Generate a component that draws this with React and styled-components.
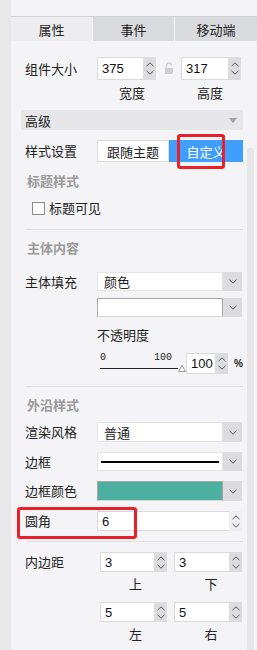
import React from 'react'
import styled, { createGlobalStyle } from 'styled-components'

const Global = createGlobalStyle`
  html, body { margin: 0; padding: 0; background: #f4f4f6; }
  body { font-family: "Noto Sans CJK SC", "Liberation Sans", sans-serif; font-size: 13px; color: #222; }
`

const NUM = `"Liberation Sans", "DejaVu Sans", sans-serif`

const Page = styled.div`
  display: flex;
  width: 257px;
  height: 650px;
  overflow: hidden;
`

const Gutter = styled.div`
  width: 11px;
  flex-shrink: 0;
  background: #e8e8e8;
`

const Panel = styled.div`
  flex: 1;
  display: flex;
  flex-direction: column;
  background: #f4f4f6;
`

const TopStrip = styled.div`
  height: 16px;
  border-bottom: 1px solid #d2d2d6;
`

const Tabs = styled.div`
  display: grid;
  grid-template-columns: 81px 81px 1fr;
  gap: 1px;
  background: #f4f4f6;
  height: 24px;
`

const Tab = styled.div`
  display: flex;
  align-items: center;
  justify-content: center;
  font-size: 13px;
  background: ${p => (p.$active ? '#ededf0' : '#d9dadd')};
  color: #222;
`

const Content = styled.div`
  flex: 1;
  display: flex;
  gap: 4px;
  padding-left: 10px;
`

const Body = styled.div`
  width: 222px;
  display: flex;
  flex-direction: column;
`

const ScrollRail = styled.div`
  width: 7px;
  margin-top: 107px;
  background: #e6e6e8;
  border-radius: 3px 3px 0 0;
`

const Row = styled.div`
  display: grid;
  grid-template-columns: 76px 1fr;
  align-items: center;
  margin-top: ${p => p.$mt || 0}px;
  position: relative;
`

const Label = styled.div`
  padding-left: 4px;
  font-size: 13px;
  line-height: 16px;
  white-space: nowrap;
`

const Pair = styled.div`
  display: flex;
  align-items: center;
  gap: ${p => p.$gap || 0}px;
  padding-left: ${p => p.$pl || 0}px;
`

const LockSlot = styled.div`
  width: 25px;
  display: flex;
  justify-content: center;
`

const NumBox = styled.div`
  display: flex;
  height: ${p => p.$h || 20}px;
  width: ${p => p.$w}px;
  flex-shrink: 0;
`

const NumValue = styled.div`
  flex: 1;
  background: #fff;
  border: 1px solid #dadada;
  border-right: none;
  display: flex;
  align-items: center;
  padding-left: 4px;
  font-family: ${NUM};
  font-size: 13px;
  color: #111;
`

const Spinner = styled.div`
  width: 13px;
  background: ${p => (p.$light ? '#eeeef0' : '#dcdcdf')};
  display: flex;
  flex-direction: column;
  align-items: center;
  justify-content: center;
  gap: 3px;
`

const Captions = styled.div`
  display: grid;
  grid-template-columns: 76px ${p => p.$first}px ${p => p.$second}px;
  margin-top: ${p => p.$mt || 0}px;
  line-height: 14px;
  font-size: 13px;
  text-align: center;
`

const AdvancedBar = styled.div`
  margin-top: 10px;
  height: 20px;
  background: #e6e6e9;
  display: flex;
  align-items: center;
  justify-content: space-between;
  padding: 0 6px 0 4px;
  font-size: 13px;
`

const Segmented = styled.div`
  display: flex;
  height: 22px;
  position: relative;
`

const SegButton = styled.div`
  width: ${p => p.$w}px;
  display: flex;
  align-items: center;
  justify-content: center;
  font-size: 13px;
  background: ${p => (p.$on ? '#409eff' : '#fff')};
  color: ${p => (p.$on ? '#fff' : '#222')};
  border: 1px solid ${p => (p.$on ? '#409eff' : '#dcdcdc')};
  box-sizing: border-box;
`

const Highlight = styled.div`
  position: absolute;
  border: 3px solid #e8202a;
  border-radius: 3px;
  box-sizing: border-box;
  pointer-events: none;
`

const SectionTitle = styled.div`
  margin-top: ${p => p.$mt}px;
  padding-left: 6px;
  font-size: 13px;
  line-height: 16px;
  font-weight: 700;
  color: #9a9a9a;
`

const CheckRow = styled.label`
  margin-top: 11px;
  padding-left: 11px;
  display: flex;
  align-items: center;
  gap: 4px;
  line-height: 16px;
  font-size: 13px;
`

const Box = styled.span`
  width: 11px;
  height: 11px;
  border: 1px solid #8a8a8a;
  background: #fff;
`

const Divider = styled.div`
  margin-top: ${p => p.$mt}px;
  margin-left: 5px;
  height: 1px;
  background: #e0e0e3;
`

const Select = styled.div`
  display: flex;
  height: ${p => p.$h || 20}px;
  width: 145px;
`

const SelectField = styled.div`
  flex: 1;
  display: flex;
  align-items: center;
  padding: 0 ${p => (p.$pad ? 6 : 3)}px;
  font-size: 13px;
  background: ${p => p.$fill || '#fff'};
  border: 1px solid ${p => (p.$sunken ? '#a8a8a8' : '#e4e4e4')};
  border-bottom-color: ${p => (p.$sunken ? '#d6d6d6' : '#e4e4e4')};
  box-sizing: border-box;
`

const SelectArrow = styled.div`
  width: 19px;
  background: #dcdcdf;
  display: flex;
  align-items: center;
  justify-content: center;
`

const LineSample = styled.div`
  flex: 1;
  height: 2px;
  background: #000;
`

const SubText = styled.div`
  margin-top: ${p => p.$mt}px;
  padding-left: 76px;
  line-height: 16px;
  font-size: 13px;
`

const SliderRow = styled.div`
  margin-top: 10px;
  padding-left: 79px;
  display: flex;
  align-items: flex-end;
  height: 21px;
`

const Slider = styled.div`
  width: 86px;
  display: flex;
  flex-direction: column;
  margin-bottom: 2px;
`

const Ticks = styled.div`
  display: flex;
  justify-content: space-between;
  width: 72px;
  font-family: "Liberation Mono", monospace;
  font-size: 10px;
  line-height: 10px;
  color: #222;
  margin-bottom: 2px;
`

const Track = styled.div`
  display: flex;
  align-items: flex-end;
`

const TrackLine = styled.div`
  width: 78px;
  height: 1px;
  background: #222;
  margin-bottom: 3px;
`

const Percent = styled.div`
  margin-left: 6px;
  align-self: center;
  font-family: ${NUM};
  font-size: 10px;
  font-weight: 700;
  color: #222;
`

const Chevron = ({ dir = 'down', color = '#5a5a5a' }) => (
  <svg width="8" height="5" viewBox="0 0 8 5">
    <path
      d={dir === 'down' ? 'M0.5 0.8 L4 4.2 L7.5 0.8' : 'M0.5 4.2 L4 0.8 L7.5 4.2'}
      fill="none"
      stroke={color}
      strokeWidth="1"
    />
  </svg>
)

const Spin = ({ light }) => (
  <Spinner $light={light}>
    <Chevron dir="up" />
    <Chevron dir="down" />
  </Spinner>
)

const Num = ({ value, w, h, light }) => (
  <NumBox $w={w} $h={h}>
    <NumValue>{value}</NumValue>
    <Spin light={light} />
  </NumBox>
)

const Lock = () => (
  <svg width="10" height="13" viewBox="0 0 10 13">
    <path d="M2.5 6 V3.5 A2.5 2.5 0 0 1 7.5 3.5" fill="none" stroke="#cfcfd2" strokeWidth="1.4" />
    <rect x="1" y="6" width="8" height="6" fill="#cfcfd2" />
  </svg>
)

const DropSelect = ({ children, fill, sunken, pad, h }) => (
  <Select $h={h}>
    <SelectField $fill={fill} $sunken={sunken} $pad={pad}>
      {children}
    </SelectField>
    <SelectArrow>
      <Chevron />
    </SelectArrow>
  </Select>
)

export default function App() {
  return (
    <>
      <Global />
      <Page>
        <Gutter />
        <Panel>
          <TopStrip />
          <Tabs>
            <Tab $active>属性</Tab>
            <Tab>事件</Tab>
            <Tab>移动端</Tab>
          </Tabs>
          <Content>
            <Body>
              <Row $mt={16}>
                <Label>组件大小</Label>
                <Pair>
                  <Num value="375" w={59} h={23} />
                  <LockSlot>
                    <Lock />
                  </LockSlot>
                  <Num value="317" w={60} h={23} />
                </Pair>
              </Row>
              <Captions $mt={6} $first={70} $second={86}>
                <span />
                <span>宽度</span>
                <span>高度</span>
              </Captions>

              <AdvancedBar>
                <span>高级</span>
                <svg width="8" height="5" viewBox="0 0 8 5">
                  <path d="M0 0 H8 L4 5 Z" fill="#a0a0a4" />
                </svg>
              </AdvancedBar>

              <Row $mt={10}>
                <Label>样式设置</Label>
                <Segmented>
                  <SegButton $w={72}>跟随主题</SegButton>
                  <SegButton $w={74} $on>自定义</SegButton>
                  <Highlight style={{ left: 80, top: -6, width: 48, height: 35 }} />
                </Segmented>
              </Row>

              <SectionTitle $mt={11}>标题样式</SectionTitle>
              <CheckRow>
                <Box />
                标题可见
              </CheckRow>

              <Divider $mt={13} />
              <SectionTitle $mt={10}>主体内容</SectionTitle>

              <Row $mt={16}>
                <Label>主体填充</Label>
                <DropSelect pad h={19}>颜色</DropSelect>
              </Row>
              <Row $mt={7}>
                <span />
                <DropSelect sunken h={19} />
              </Row>
              <SubText $mt={10}>不透明度</SubText>
              <SliderRow>
                <Slider>
                  <Ticks>
                    <span>0</span>
                    <span>100</span>
                  </Ticks>
                  <Track>
                    <TrackLine />
                    <svg width="8" height="7" viewBox="0 0 8 7">
                      <path d="M4 0.5 L7.5 6.5 H0.5 Z" fill="#fff" stroke="#9a9a9a" strokeWidth="1" />
                    </svg>
                  </Track>
                </Slider>
                <Num value="100" w={42} h={21} />
                <Percent>%</Percent>
              </SliderRow>

              <Divider $mt={12} />
              <SectionTitle $mt={10}>外沿样式</SectionTitle>

              <Row $mt={9}>
                <Label>渲染风格</Label>
                <DropSelect pad>普通</DropSelect>
              </Row>
              <Row $mt={10}>
                <Label>边框</Label>
                <DropSelect h={19}>
                  <LineSample />
                </DropSelect>
              </Row>
              <Row $mt={10}>
                <Label>边框颜色</Label>
                <DropSelect sunken fill="#4caf9f" />
              </Row>
              <Row $mt={10}>
                <Label>圆角</Label>
                <Num value="6" w={145} h={20} light />
                <Highlight style={{ left: -4, top: -4, width: 120, height: 32 }} />
              </Row>

              <Divider $mt={10} />

              <Row $mt={10}>
                <Label>内边距</Label>
                <Pair $gap={7} $pl={3}>
                  <Num value="3" w={67} />
                  <Num value="3" w={68} />
                </Pair>
              </Row>
              <Captions $mt={5} $first={77} $second={74}>
                <span />
                <span>上</span>
                <span>下</span>
              </Captions>
              <Row $mt={11}>
                <span />
                <Pair $gap={7} $pl={3}>
                  <Num value="5" w={67} />
                  <Num value="5" w={68} />
                </Pair>
              </Row>
              <Captions $mt={5} $first={77} $second={74}>
                <span />
                <span>左</span>
                <span>右</span>
              </Captions>
            </Body>
            <ScrollRail />
          </Content>
        </Panel>
      </Page>
    </>
  )
}
